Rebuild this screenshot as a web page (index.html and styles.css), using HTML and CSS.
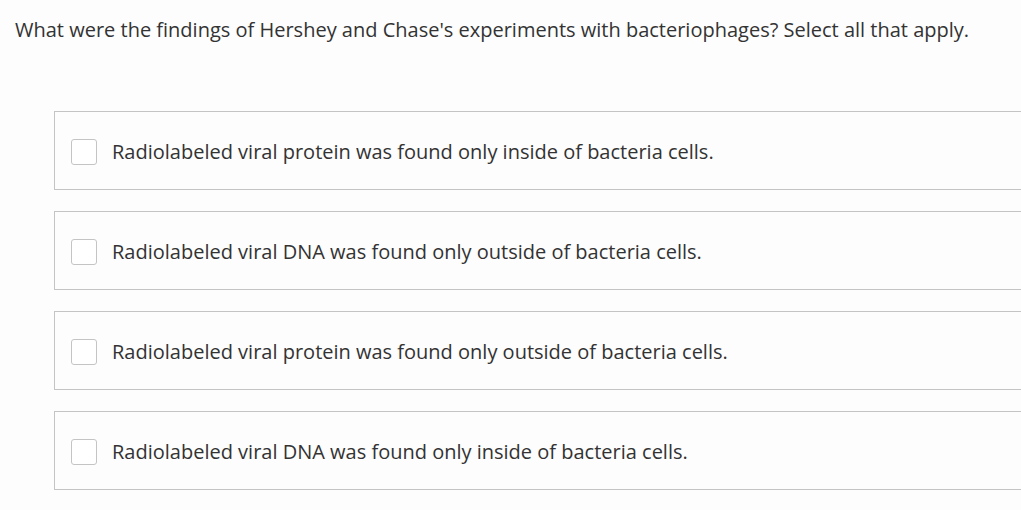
FILE: index.html
```html
<!DOCTYPE html>
<html>
<head>
<meta charset="utf-8">
<link rel="stylesheet" href="styles.css">
</head>
<body>
<div class="page">
  <p class="question">What were the findings of Hershey and Chase's experiments with bacteriophages? Select all that apply.</p>
  <div class="options">
    <label class="option"><span class="box"></span><span class="text">Radiolabeled viral protein was found only inside of bacteria cells.</span></label>
    <label class="option"><span class="box"></span><span class="text">Radiolabeled viral DNA was found only outside of bacteria cells.</span></label>
    <label class="option"><span class="box"></span><span class="text">Radiolabeled viral protein was found only outside of bacteria cells.</span></label>
    <label class="option"><span class="box"></span><span class="text">Radiolabeled viral DNA was found only inside of bacteria cells.</span></label>
  </div>
</div>
</body>
</html>
```
FILE: styles.css
```css
html, body {
  margin: 0;
  padding: 0;
  background: #fdfdfd;
  overflow: hidden;
}
.page {
  font-family: "Open Sans", "Liberation Sans", sans-serif;
  color: #333;
  width: 1021px;
  height: 510px;
  overflow: hidden;
}
.question {
  margin: 0;
  padding: 16px 0 0 15px;
  font-size: 20px;
  line-height: 28px;
}
.options {
  display: flex;
  flex-direction: column;
  gap: 21px;
  margin: 67px 0 0 54px;
  width: 1100px;
}
.option {
  display: flex;
  align-items: center;
  height: 75px;
  padding: 2px 0 0 16px;
  border: 1px solid #c4c4c4;
  background: #fdfdfd;
}
.box {
  width: 24px;
  height: 24px;
  border: 1px solid #c4c4c4;
  border-radius: 3px;
  background: #fff;
  flex: none;
}
.text {
  margin-left: 15px;
  font-size: 20px;
  line-height: 28px;
}
```
